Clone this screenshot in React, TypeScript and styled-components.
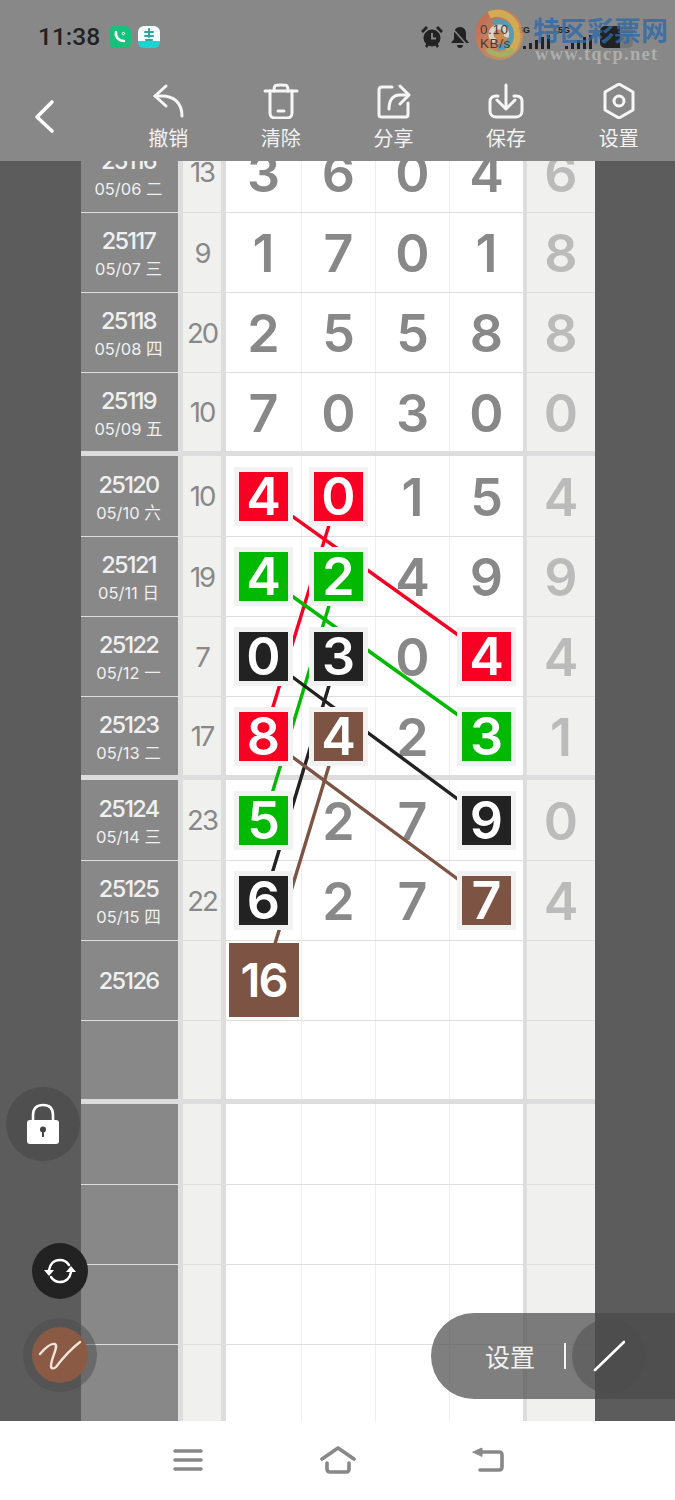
import React from 'react'
import styled, { createGlobalStyle } from 'styled-components'

const GlobalStyle = createGlobalStyle`
  html, body {
    margin: 0;
    padding: 0;
    background: #ffffff;
  }
  * {
    box-sizing: border-box;
  }
`

const CJK = `"Noto Sans CJK SC", sans-serif`
const NUM = `Inter, "Noto Sans CJK SC", sans-serif`

const tones: Record<string, string> = {
  r: '#f70023',
  g: '#00b900',
  k: '#222222',
  b: '#7d5444',
}

const Page = styled.div`
  position: relative;
  width: 675px;
  height: 1500px;
  display: flex;
  flex-direction: column;
  overflow: hidden;
  background: #ffffff;
`

const Header = styled.header`
  flex: none;
  height: 161px;
  background: #888888;
  display: flex;
  flex-direction: column;
`

const StatusBar = styled.div`
  height: 75px;
  padding: 0 42px 1px 38px;
  display: flex;
  align-items: center;
`

const Clock = styled.span`
  width: 71px;
  font: 500 24.5px/1 Roboto, sans-serif;
  color: #222222;
`

const AppIcon = styled.span<{ $bg: string }>`
  width: 22px;
  height: 22px;
  border-radius: 6px;
  margin-right: 7px;
  background: ${({ $bg }) => $bg};
  display: flex;
  align-items: center;
  justify-content: center;
  overflow: hidden;
`

const StatusRight = styled.div`
  margin-left: auto;
  display: flex;
  align-items: center;
  gap: 8px;
`

const NetSpeed = styled.span`
  position: relative;
  z-index: 5;
  width: 30px;
  margin-left: 3px;
  font: 400 13.5px/14px "Liberation Sans", sans-serif;
  color: #4a3a34;
  letter-spacing: 0.6px;
  white-space: nowrap;
`

const Signal = styled.span<{ $wide?: boolean }>`
  width: ${({ $wide }) => ($wide ? '34px' : '32px')};
  display: flex;
  flex-direction: column;
  font: 700 9px/9px "Liberation Sans", sans-serif;
  color: #222222;
`

const Battery = styled.span`
  width: 33px;
  height: 22px;
  border-radius: 5px;
  background: linear-gradient(90deg, #222222 62%, #777777 62%);
`

const Watermark = styled.div`
  position: absolute;
  left: 475px;
  top: 9px;
  width: 196px;
  height: 54px;
  pointer-events: none;
`

const LogoWrap = styled.span`
  position: absolute;
  left: 0;
  top: 0;
  opacity: 0.85;
`

const SiteName = styled.span`
  position: absolute;
  left: 58px;
  top: 4px;
  font: 700 27px/34px ${CJK};
  color: rgba(45, 105, 170, 0.78);
  white-space: nowrap;
`

const SiteUrl = styled.span`
  position: absolute;
  left: 60px;
  top: 35px;
  font: 700 18.5px/20px "Liberation Serif", serif;
  letter-spacing: 1.3px;
  color: rgba(190, 190, 190, 0.72);
  white-space: nowrap;
`

const Toolbar = styled.div`
  flex: 1;
  display: flex;
  padding-top: 8px;
`

const BackSlot = styled.div`
  width: 112px;
  padding: 16px 0 0 32px;
`

const Tool = styled.div`
  width: 112.7px;
  display: flex;
  flex-direction: column;
  align-items: center;
  gap: 5px;
  color: #f2f2f2;
  font: 400 20px/28px ${CJK};
`

const Main = styled.main`
  flex: none;
  height: 1260px;
  background: #5c5c5c;
  overflow: hidden;
  position: relative;
`

const Table = styled.div`
  position: relative;
  width: 514px;
  margin: -29px 0 0 81px;
`

const Group = styled.div`
  border-bottom: 5px solid #dddddd;
`

const Row = styled.div`
  display: flex;
  height: 80px;
  border-bottom: 1px solid #dedede;

  ${Group} > &:first-child {
    height: 81px;
  }

  ${Group} > &:last-child {
    height: 78px;
    border-bottom: 0;
  }
`

const DateCell = styled.div`
  width: 97px;
  padding-right: 2px;
  background: #888888;
  color: #f0f0f0;
  display: flex;
  flex-direction: column;
  align-items: center;
  justify-content: center;
`

const Issue = styled.span<{ $alone?: boolean }>`
  font: 500 23.5px/28px ${NUM};
  letter-spacing: -1.7px;
  margin-top: ${({ $alone }) => ($alone ? '0' : '5px')};
`

const Day = styled.span`
  font: 400 16.5px/28px ${NUM};
  letter-spacing: 0;
`

const SumCell = styled.div`
  width: 48px;
  padding-top: 2px;
  background: #f0f0ef;
  border-left: 5px solid #dddddd;
  border-right: 5px solid #dddddd;
  color: #888888;
  font: 400 27.5px/1 ${NUM};
  letter-spacing: -2px;
  display: flex;
  align-items: center;
  justify-content: center;
`

const NumCell = styled.div<{ $first?: boolean }>`
  width: ${({ $first }) => ($first ? '75px' : '74px')};
  padding-top: 3px;
  background: #ffffff;
  border-left: ${({ $first }) => ($first ? '0' : '1px solid #eeeeee')};
  color: #888888;
  font: 600 52px/1 ${NUM};
  display: flex;
  align-items: center;
  justify-content: center;
`

const HitBox = styled.div<{ $tone: string }>`
  position: relative;
  z-index: 2;
  width: 59px;
  height: 59px;
  margin-top: -3px;
  border: 5px solid #f2f2f2;
  background: ${({ $tone }) => tones[$tone]};
  background-clip: padding-box;
  color: #ffffff;
  font: 600 52px/49px ${NUM};
  text-align: center;
`

const TotalBox = styled.div`
  position: relative;
  z-index: 2;
  width: 70px;
  height: 74px;
  margin-top: -5px;
  background: ${tones.b};
  color: #ffffff;
  font: 600 47px/74px ${NUM};
  letter-spacing: -2px;
  text-align: center;
`

const TailCell = styled.div`
  width: 72px;
  padding-top: 3px;
  background: #f0f0ef;
  border-left: 4px solid #dddddd;
  color: #bbbbbb;
  font: 600 52px/1 ${NUM};
  display: flex;
  align-items: center;
  justify-content: center;
`

const Links = styled.svg`
  position: absolute;
  left: 0;
  top: 0;
  z-index: 1;
  pointer-events: none;
`

const RoundButton = styled.div<{ $x: number; $y: number; $size: number; $bg: string }>`
  position: absolute;
  z-index: 3;
  left: ${({ $x }) => $x}px;
  top: ${({ $y }) => $y}px;
  width: ${({ $size }) => $size}px;
  height: ${({ $size }) => $size}px;
  border-radius: 50%;
  background: ${({ $bg }) => $bg};
  display: flex;
  align-items: center;
  justify-content: center;
`

const Pill = styled.div`
  position: absolute;
  z-index: 3;
  left: 431px;
  top: 1152px;
  width: 244px;
  height: 86px;
  border-radius: 43px 0 0 43px;
  background: rgba(75, 75, 75, 0.71);
  display: flex;
  align-items: center;
  padding-left: 54px;
`

const PillLabel = styled.span`
  width: 50px;
  font: 400 25px/1 ${CJK};
  color: #f0f0f0;
`

const PillDivider = styled.span`
  width: 2px;
  height: 26px;
  margin-left: 29px;
  background: #f4f4f4;
`

const PenCircle = styled.span`
  width: 74px;
  height: 74px;
  margin-left: 6px;
  border-radius: 50%;
  background: rgba(75, 75, 75, 0.5);
  display: flex;
  align-items: center;
  justify-content: center;
`

const BottomNav = styled.nav`
  flex: 1;
  background: #ffffff;
  display: flex;
  justify-content: center;
  align-items: center;
  padding-bottom: 2px;
`

const NavSlot = styled.div`
  width: 150px;
  display: flex;
  justify-content: center;
`

type Cell = string | [string, string]

type Draw = {
  id?: string
  day?: string
  sum?: string
  cells?: Cell[]
  tail?: string
  total?: string
}

const groups: Draw[][] = [
  [
    { id: '25116', day: '05/06 二', sum: '13', cells: ['3', '6', '0', '4'], tail: '6' },
    { id: '25117', day: '05/07 三', sum: '9', cells: ['1', '7', '0', '1'], tail: '8' },
    { id: '25118', day: '05/08 四', sum: '20', cells: ['2', '5', '5', '8'], tail: '8' },
    { id: '25119', day: '05/09 五', sum: '10', cells: ['7', '0', '3', '0'], tail: '0' },
  ],
  [
    { id: '25120', day: '05/10 六', sum: '10', cells: [['4', 'r'], ['0', 'r'], '1', '5'], tail: '4' },
    { id: '25121', day: '05/11 日', sum: '19', cells: [['4', 'g'], ['2', 'g'], '4', '9'], tail: '9' },
    { id: '25122', day: '05/12 一', sum: '7', cells: [['0', 'k'], ['3', 'k'], '0', ['4', 'r']], tail: '4' },
    { id: '25123', day: '05/13 二', sum: '17', cells: [['8', 'r'], ['4', 'b'], '2', ['3', 'g']], tail: '1' },
  ],
  [
    { id: '25124', day: '05/14 三', sum: '23', cells: [['5', 'g'], '2', '7', ['9', 'k']], tail: '0' },
    { id: '25125', day: '05/15 四', sum: '22', cells: [['6', 'k'], '2', '7', ['7', 'b']], tail: '4' },
    { id: '25126', total: '16' },
    {},
  ],
  [{}, {}, {}, {}],
]

// page coordinates, the viewBox below starts at the table corner
const links = [
  { tone: 'r', from: [264, 496], to: [486, 655] },
  { tone: 'r', from: [338, 496], to: [264, 736] },
  { tone: 'g', from: [264, 576], to: [486, 735] },
  { tone: 'g', from: [338, 576], to: [264, 820] },
  { tone: 'k', from: [264, 656], to: [486, 820] },
  { tone: 'k', from: [338, 656], to: [264, 900] },
  { tone: 'b', from: [264, 736], to: [486, 900] },
  { tone: 'b', from: [338, 736], to: [264, 980] },
]

const Stroke = ({ children, size = 36 }: { children: React.ReactNode; size?: number }) => (
  <svg
    width={size}
    height={size}
    viewBox={`0 0 ${size} ${size}`}
    fill="none"
    stroke="#f6f6f6"
    strokeWidth="3"
    strokeLinecap="round"
    strokeLinejoin="round"
  >
    {children}
  </svg>
)

const tools = [
  {
    label: '撤销',
    icon: (
      <>
        <path d="M16 3 5 13l11 10" />
        <path d="M5 13h7c12 0 20 7 20 20" />
      </>
    ),
  },
  {
    label: '清除',
    icon: (
      <>
        <path d="M2 8h32" />
        <path d="M11 8c0-6 1-6 7-6s7 0 7 6" />
        <path d="M7 8v22c0 3 2 5 5 5h12c3 0 5-2 5-5V8" />
        <path d="M15 28h6" />
      </>
    ),
  },
  {
    label: '分享',
    icon: (
      <>
        <path d="M17 4H7C5 4 4 5 4 7v25c0 1 1 2 3 2h24c1 0 2-1 2-3V20" />
        <path d="M14 26c0-10 5-14 10-14h9" />
        <path d="m25 3 9 9-9 9" />
      </>
    ),
  },
  {
    label: '保存',
    icon: (
      <>
        <path d="M10 13H8c-4 0-6 3-6 5v10c0 4 3 6 6 6h20c4 0 6-3 6-6V18c0-3-2-5-6-5h-2" />
        <path d="M18 2v23" />
        <path d="m9 17 9 9 9-9" />
      </>
    ),
  },
  {
    label: '设置',
    icon: (
      <>
        <path d="M18 1 32 9v18l-14 8-14-8V9z" />
        <circle cx="18" cy="18" r="5" />
      </>
    ),
  },
]

const Logo = () => (
  <svg width="48" height="51" viewBox="0 0 48 51">
    <defs>
      <linearGradient id="swirlBase" x1="0" y1="0" x2="1" y2="1">
        <stop offset="0" stopColor="#c8624a" />
        <stop offset="0.55" stopColor="#d4845a" />
        <stop offset="1" stopColor="#c9a04c" />
      </linearGradient>
    </defs>
    <ellipse cx="24" cy="25.5" rx="24" ry="25.5" fill="url(#swirlBase)" />
    <path d="M14 6c14-6 28 4 28 20 0 8-4 14-10 17" fill="none" stroke="#e0b04a" strokeWidth="7" />
    <path d="M12 40c8 8 20 7 26 0" fill="none" stroke="#a9b860" strokeWidth="5" />
    <path d="M18 14c10-4 18 3 18 12 0 8-6 13-13 12" fill="none" stroke="#4f9fb5" strokeWidth="6" />
    <path d="M20 32c-7-4-4-14 4-14 6 0 9 5 7 10" fill="none" stroke="#e8e2d0" strokeWidth="5" />
    <circle cx="25" cy="26" r="4" fill="#d89040" />
  </svg>
)

const Bars = ({ width }: { width: number }) => (
  <svg width={width} height="14" viewBox={`0 0 ${width} 14`} fill="#222222">
    <rect x={width - 27} y="11" width="3" height="3" />
    <rect x={width - 21} y="8" width="3" height="6" />
    <rect x={width - 15} y="5" width="3" height="9" />
    <rect x={width - 9} y="2" width="3" height="12" />
    <rect x={width - 3} y="0" width="3" height="14" />
  </svg>
)

const renderCell = (cell: Cell, index: number) => (
  <NumCell key={index} $first={index === 0}>
    {typeof cell === 'string' ? cell : <HitBox $tone={cell[1]}>{cell[0]}</HitBox>}
  </NumCell>
)

const renderRow = (draw: Draw, index: number) => {
  const cells: React.ReactNode[] = draw.cells
    ? draw.cells.map(renderCell)
    : [
        <NumCell key={0} $first>
          {draw.total && <TotalBox>{draw.total}</TotalBox>}
        </NumCell>,
        <NumCell key={1} />,
        <NumCell key={2} />,
        <NumCell key={3} />,
      ]

  return (
    <Row key={index}>
      <DateCell>
        {draw.id && <Issue $alone={!draw.day}>{draw.id}</Issue>}
        {draw.day && <Day>{draw.day}</Day>}
      </DateCell>
      <SumCell>{draw.sum}</SumCell>
      {cells}
      <TailCell>{draw.tail}</TailCell>
    </Row>
  )
}

export default function App() {
  return (
    <Page>
      <GlobalStyle />
      <Header>
        <StatusBar>
          <Clock>11:38</Clock>
          <AppIcon $bg="#14c27c">
            <svg width="16" height="16" viewBox="0 0 16 16" fill="none" stroke="#ffffff" strokeWidth="2.6" strokeLinecap="round">
              <path d="M4 3c-1 5 3 9 8 9" />
              <circle cx="11.5" cy="4.5" r="1.2" strokeWidth="1" />
            </svg>
          </AppIcon>
          <AppIcon $bg="linear-gradient(#f6fbfb 68%, #1fd3d3 68%)">
            <svg width="14" height="18" viewBox="0 0 14 18" fill="none" stroke="#27a9a0" strokeWidth="2" strokeLinecap="round">
              <path d="M3 4h8M7 1v8M3 8h8M4 12h6" />
            </svg>
          </AppIcon>
          <StatusRight>
            <svg width="22" height="22" viewBox="0 0 22 22" fill="#222222">
              <circle cx="11" cy="12" r="8.5" />
              <path d="M0 5 5 0l2 2-5 5zM22 5l-5-5-2 2 5 5zM4 20l2-3 2 2-2 3zM18 20l-2-3-2 2 2 3z" />
              <path d="M11 7v5.5h4" fill="none" stroke="#888888" strokeWidth="1.8" />
            </svg>
            <svg width="18" height="21" viewBox="0 0 18 21" fill="#222222">
              <path d="M9 0c4 0 6 3 6 7v5l3 4H0l3-4V7c0-4 2-7 6-7z" />
              <path d="M6 18h6c0 2-1 3-3 3s-3-1-3-3z" />
              <path d="M1 1l16 18" stroke="#888888" strokeWidth="1.6" />
            </svg>
            <NetSpeed>
              0.10
              <br />
              KB/s
            </NetSpeed>
            <Signal>
              5G
              <Bars width={32} />
            </Signal>
            <Signal $wide>
              5G
              <Bars width={34} />
            </Signal>
            <Battery />
          </StatusRight>
        </StatusBar>
        <Toolbar>
          <BackSlot>
            <svg width="24" height="36" viewBox="0 0 24 36" fill="none" stroke="#ffffff" strokeWidth="3.6" strokeLinecap="round" strokeLinejoin="round">
              <path d="M20 3 5 18l15 14" />
            </svg>
          </BackSlot>
          {tools.map((tool) => (
            <Tool key={tool.label}>
              <Stroke>{tool.icon}</Stroke>
              {tool.label}
            </Tool>
          ))}
        </Toolbar>
      </Header>
      <Watermark>
        <LogoWrap>
          <Logo />
        </LogoWrap>
        <SiteName>特区彩票网</SiteName>
        <SiteUrl>www.tqcp.net</SiteUrl>
      </Watermark>

      <Main>
        <Table>
          {groups.map((group, index) => (
            <Group key={index}>{group.map(renderRow)}</Group>
          ))}
          <Links width="514" height="1296" viewBox="81 132 514 1296">
            {links.map((link, index) => (
              <line
                key={index}
                x1={link.from[0]}
                y1={link.from[1]}
                x2={link.to[0]}
                y2={link.to[1]}
                stroke={tones[link.tone]}
                strokeWidth="3.4"
              />
            ))}
          </Links>
        </Table>

        <RoundButton $x={6} $y={926} $size={74} $bg="#4f4f4f">
          <svg width="34" height="42" viewBox="0 0 34 42">
            <path d="M7 20v-8C7 5 11 2 17 2s10 3 10 10v8" fill="none" stroke="#ffffff" strokeWidth="2.6" />
            <rect x="1" y="17" width="32" height="24" rx="3" fill="#ffffff" />
            <circle cx="17" cy="26.5" r="3" fill="#444444" />
            <rect x="16" y="27" width="2" height="7" fill="#444444" />
          </svg>
        </RoundButton>
        <RoundButton $x={32} $y={1082} $size={56} $bg="#222222">
          <svg width="32" height="28" viewBox="0 0 32 28" fill="none" stroke="#ffffff" strokeWidth="2.4" strokeLinecap="round">
            <path d="M5 13c1-6 5-10 11-10 4 0 7 2 9 5" />
            <path d="M27 15c-1 6-5 10-11 10-4 0-7-2-9-5" />
            <path d="M0 13h10l-5 6zM32 15H22l5-6z" fill="#ffffff" stroke="none" />
          </svg>
        </RoundButton>
        <RoundButton $x={23} $y={1157} $size={74} $bg="rgba(75, 75, 75, 0.5)">
          <RoundButton $x={9} $y={9} $size={56} $bg="#8a5a45">
            <svg width="46" height="32" viewBox="0 0 46 32" fill="none" stroke="#f3e4da" strokeWidth="2.4" strokeLinecap="round" strokeLinejoin="round">
              <path d="M3 15C8 9 14 4 18 5c4 2-4 14-4 22 0 3 3 3 5 1 6-8 15-18 24-25" />
            </svg>
          </RoundButton>
        </RoundButton>
        <Pill>
          <PillLabel>设置</PillLabel>
          <PillDivider />
          <PenCircle>
            <svg width="32" height="32" viewBox="0 0 32 32" stroke="#ffffff" strokeWidth="2.6" strokeLinecap="round">
              <path d="M2 30 31 2" />
            </svg>
          </PenCircle>
        </Pill>
      </Main>

      <BottomNav>
        <NavSlot>
          <svg width="30" height="24" viewBox="0 0 30 24" stroke="#888888" strokeWidth="3.6" strokeLinecap="round">
            <path d="M2 3h26M2 12h26M2 21h26" />
          </svg>
        </NavSlot>
        <NavSlot>
          <svg width="36" height="28" viewBox="0 0 36 28" fill="none" stroke="#888888" strokeWidth="3.6" strokeLinecap="round" strokeLinejoin="round">
            <path d="M2 13 18 2l16 11" />
            <path d="M7 17v6c0 2 1 3 3 3h16c2 0 3-1 3-3v-6" />
          </svg>
        </NavSlot>
        <NavSlot>
          <svg width="32" height="28" viewBox="0 0 32 28" fill="none" stroke="#888888" strokeWidth="3.6" strokeLinecap="round" strokeLinejoin="round">
            <path d="M6 6h21c2 0 3 1 3 3v12c0 2-1 3-3 3H8" />
            <path d="M1 6l9-4v8z" fill="#888888" strokeWidth="1" />
          </svg>
        </NavSlot>
      </BottomNav>
    </Page>
  )
}
